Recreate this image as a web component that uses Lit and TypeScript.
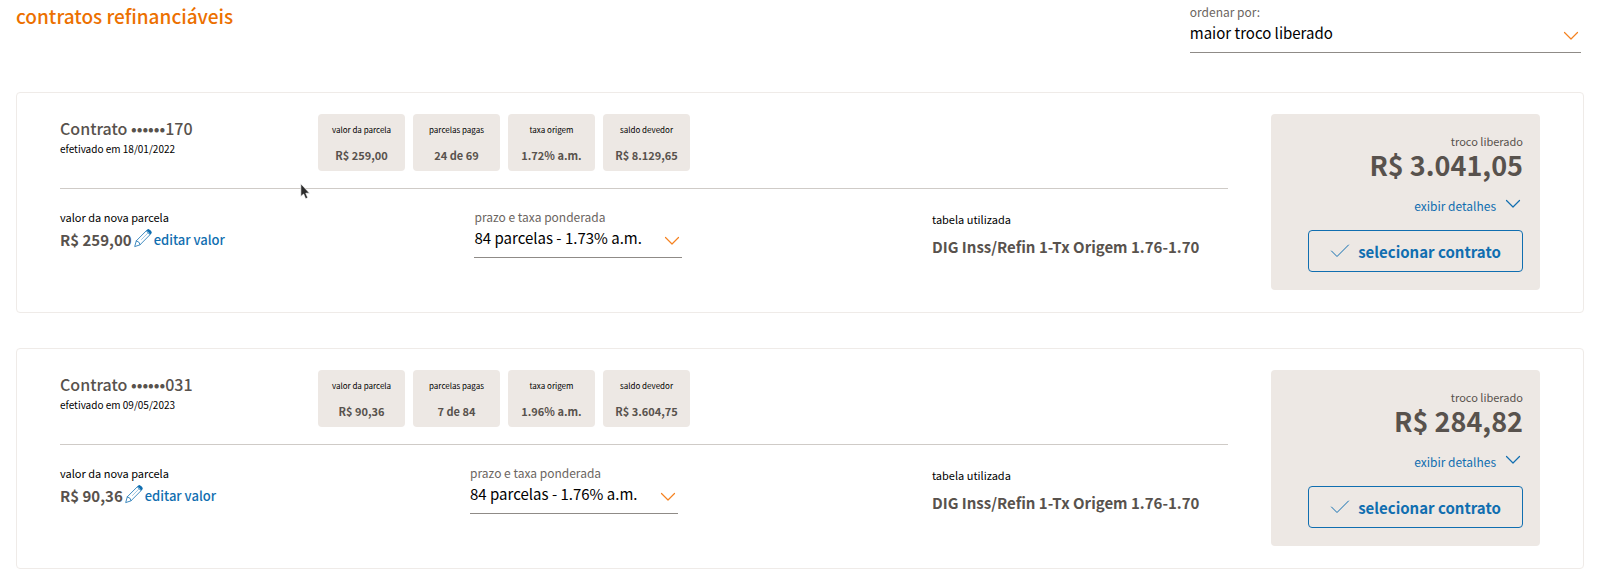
import { LitElement, html, css, svg } from "lit";
import { customElement, property } from "lit/decorators.js";

interface Contrato {
  id: string;
  efetivado: string;
  resumo: [string, string][];
  parcela: string;
  prazo: string;
  tabela: string;
  troco: string;
}

const contratos: Contrato[] = [
  {
    id: "170",
    efetivado: "18/01/2022",
    resumo: [
      ["valor da parcela", "R$ 259,00"],
      ["parcelas pagas", "24 de 69"],
      ["taxa origem", "1.72% a.m."],
      ["saldo devedor", "R$ 8.129,65"],
    ],
    parcela: "R$ 259,00",
    prazo: "84 parcelas - 1.73% a.m.",
    tabela: "DIG Inss/Refin 1-Tx Origem 1.76-1.70",
    troco: "R$ 3.041,05",
  },
  {
    id: "031",
    efetivado: "09/05/2023",
    resumo: [
      ["valor da parcela", "R$ 90,36"],
      ["parcelas pagas", "7 de 84"],
      ["taxa origem", "1.96% a.m."],
      ["saldo devedor", "R$ 3.604,75"],
    ],
    parcela: "R$ 90,36",
    prazo: "84 parcelas - 1.76% a.m.",
    tabela: "DIG Inss/Refin 1-Tx Origem 1.76-1.70",
    troco: "R$ 284,82",
  },
];

const chevron = html`<svg class="chevron" viewBox="0 0 16 10" width="16" height="10" aria-hidden="true">
  ${svg`<path d="M1.5 1.5 L8 8 L14.5 1.5" fill="none" stroke="currentColor" stroke-width="1.2" stroke-linejoin="round" stroke-linecap="round"/>`}
</svg>`;

const check = html`<svg viewBox="0 0 20 14" width="20" height="14" aria-hidden="true">
  <path d="M1.5 7 L7 12.5 L18.5 1" fill="none" stroke="currentColor" stroke-width="1" stroke-linejoin="round" stroke-linecap="round"/>
</svg>`;

const pencil = html`<svg class="pencil" viewBox="0 0 20 20" width="20" height="20" aria-hidden="true">
  <g fill="none" stroke="currentColor" stroke-width=".8" stroke-linejoin="round" stroke-linecap="round">
    <path d="M1.8 18.2 L3.3 12.8 L13.2 2.9 L17 6.7 L7.2 16.6 Z"/>
    <path d="M3.3 12.8 Q6.4 13.2 7.2 16.6"/>
    <path d="M8.5 11.5 L14.9 5" stroke-width=".4"/>
  </g>
  <path d="M13 2.6 L14.4 1.4 Q15 .9 15.9 1.3 Q18.1 2.3 18.7 4.1 Q18.9 5 18.4 5.6 L17.2 6.8 Q15.9 4 13 2.6 Z" fill="currentColor"/>
</svg>`;

@customElement("campo-selecao")
export class CampoSelecao extends LitElement {
  @property() rotulo = "";
  @property() valor = "";

  static styles = css`
    :host { display: block; }
    .label { display: block; font-size: 12px; line-height: 18px; color: #6b655f; }
    .box { display: grid; align-items: center; border-bottom: 1px solid #8f8b87; }
    .select {
      grid-area: 1 / 1; appearance: none; border: 0; margin: 0; padding: 0 28px 8px 0;
      width: 100%; height: 31px; background: transparent; color: #000;
      font: inherit; font-size: 15px; text-overflow: ellipsis;
    }
    .chevron { grid-area: 1 / 1; justify-self: end; margin: 0 2px 2px 0; color: #f58220; pointer-events: none; }
  `;

  render() {
    return html`
      <label class="label" for="campo">${this.rotulo}</label>
      <div class="box">
        <select class="select" id="campo"><option>${this.valor}</option></select>
        ${chevron}
      </div>
    `;
  }
}

@customElement("cartao-contrato")
export class CartaoContrato extends LitElement {
  @property({ attribute: false }) contrato!: Contrato;

  static styles = css`
    :host { display: block; }
    .card {
      display: flex; align-items: flex-start; gap: 43px; padding: 21px 43px 22px; border: 1px solid #efebe8;
      border-radius: 4px;
    }
    .main { flex: 1; min-width: 0; }
    .top { display: flex; padding-bottom: 17px; border-bottom: 1px solid #cfcbc7; }
    .who { width: 258px; }
    .name { margin: 0; font-size: 16px; line-height: 28px; font-weight: 500; color: #58524d; }
    .date { margin: 0; font-size: 10px; line-height: 14px; color: #000; }
    .chips { display: flex; gap: 8px; margin: 0; }
    .chip {
      display: flex; flex-direction: column; gap: 9px; box-sizing: border-box; width: 87px;
      padding: 9px 0 7px; border-radius: 4px; background: #ede8e4; text-align: center; white-space: nowrap;
    }
    .chip-label { font-size: 8px; line-height: 14px; color: #000; }
    .chip-value { margin: 0; font-size: 11px; line-height: 18px; font-weight: 700; color: #58524d; }
    .bottom { display: flex; justify-content: space-between; padding-top: 19px; }
    .caption { margin: 0; font-size: 11px; line-height: 18px; color: #000; }
    .value { display: flex; align-items: center; }
    .amount { font-size: 15px; line-height: 28px; font-weight: 700; color: #58524d; }
    .edit {
      display: flex; align-items: center; gap: 1px; padding: 0; border: 0; background: none;
      color: #106eb0; font: inherit; font-size: 13px; line-height: 28px; font-weight: 500;
    }
    .pencil { margin: 0 0 4px 1px; }
    .term { width: 208px; }
    .table { width: 296px; padding-top: 2px; white-space: nowrap; }
    .table .amount { margin: 0; padding-top: 5px; }
    .panel {
      box-sizing: border-box; width: 269px; padding: 18px 17px; border-radius: 4px;
      background: #ede8e4; display: flex; flex-direction: column; align-items: flex-end;
    }
    .panel .caption { color: #58524d; }
    .total { margin: 0; font-size: 27px; line-height: 30px; font-weight: 700; color: #58524d; }
    .details {
      display: flex; align-items: center; gap: 9px; margin-top: 15px; padding: 0 2px 0 0; border: 0;
      background: none; color: #106eb0; font: inherit; font-size: 12px; line-height: 22px;
    }
    .details .chevron { margin-bottom: 4px; }
    .choose {
      display: flex; align-items: center; justify-content: center; gap: 8px; width: 215px; height: 42px; margin-top: 13px;
      padding: 0; flex: none; border: 1px solid #106eb0; border-radius: 4px; background: none;
      color: #106eb0; font: inherit; font-size: 15px; font-weight: 700;
    }
  `;

  render() {
    const c = this.contrato;
    return html`
      <article class="card">
        <div class="main">
          <div class="top">
            <div class="who">
              <h2 class="name">Contrato ••••••${c.id}</h2>
              <p class="date">efetivado em ${c.efetivado}</p>
            </div>
            <dl class="chips">
              ${c.resumo.map(([rotulo, valor]) => html`
                <div class="chip"><dt class="chip-label">${rotulo}</dt><dd class="chip-value">${valor}</dd></div>
              `)}
            </dl>
          </div>
          <div class="bottom">
            <div>
              <p class="caption">valor da nova parcela</p>
              <div class="value">
                <span class="amount">${c.parcela}</span>
                <button class="edit">${pencil}editar valor</button>
              </div>
            </div>
            <campo-selecao class="term" rotulo="prazo e taxa ponderada" .valor=${c.prazo}></campo-selecao>
            <div class="table">
              <p class="caption">tabela utilizada</p>
              <p class="amount">${c.tabela}</p>
            </div>
          </div>
        </div>
        <div class="panel">
          <p class="caption">troco liberado</p>
          <p class="total">${c.troco}</p>
          <button class="details">exibir detalhes ${chevron}</button>
          <button class="choose">${check}selecionar contrato</button>
        </div>
      </article>
    `;
  }
}

@customElement("app-root")
export class AppRoot extends LitElement {
  static styles = css`
    :host {
      display: block; position: relative; padding: 3px 16px 0; background: #fff;
      font-family: "Noto Sans CJK JP", "Noto Sans", sans-serif;
    }
    .header { display: flex; justify-content: space-between; align-items: flex-start; padding-right: 3px; }
    .title { margin: 0; font-size: 19px; line-height: 26px; font-weight: 500; color: #ec7000; }
    .sort { width: 25%; }
    .list { display: grid; gap: 35px; padding-top: 39px; }
    .pointer { position: absolute; left: 300px; top: 183px; pointer-events: none; }
  `;

  render() {
    return html`
      <header class="header">
        <h1 class="title">contratos refinanciáveis</h1>
        <campo-selecao class="sort" rotulo="ordenar por:" valor="maior troco liberado"></campo-selecao>
      </header>
      <main class="list">
        ${contratos.map((c) => html`<cartao-contrato .contrato=${c}></cartao-contrato>`)}
      </main>
      <svg class="pointer" viewBox="0 0 11 17" width="11" height="17" aria-hidden="true">
        <path d="M.8 .8 V13.6 L3.6 11 L5.6 15.8 L7.8 14.8 L5.8 10.2 H9.6 Z" fill="#2b2b2b" stroke="#fff" stroke-width=".7"/>
      </svg>
    `;
  }
}
